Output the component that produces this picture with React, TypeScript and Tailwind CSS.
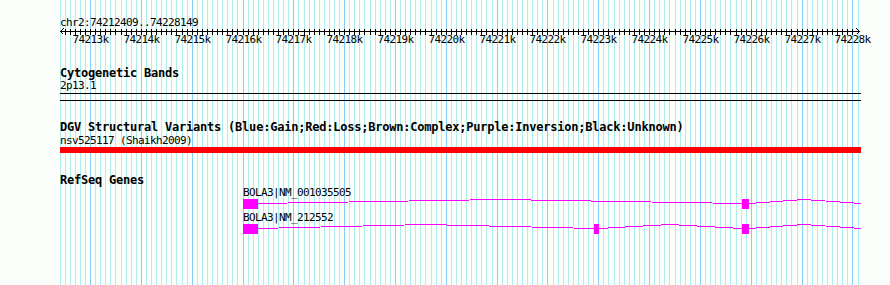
const START = 74212409;
const END = 74228149;
const LEFT = 60;
const WIDTH = 800;

const toX = (bp: number) =>
  Math.round(LEFT + ((bp - START) * WIDTH) / (END - START));

// grid lines every 100bp, darker every 1kb
const grid: { x: number; major: boolean }[] = [];
for (let bp = 74212400; bp <= 74228100; bp += 100) {
  grid.push({ x: toX(bp), major: bp % 1000 === 0 });
}

const ticks: number[] = [];
for (let bp = 74212500; bp <= 74228000; bp += 100) ticks.push(toX(bp) - LEFT);

const labels: { x: number; text: string }[] = [];
for (let k = 74213; k <= 74228; k++) {
  labels.push({ x: toX(k * 1000) - LEFT, text: `${k}k` });
}

type Gene = {
  name: string;
  exons: [number, number][];
  introns: [number, number, number][];
};

// coordinates relative to the left edge of the track (x=60)
const genes: Gene[] = [
  {
    name: "BOLA3|NM_001035505",
    exons: [
      [183, 198],
      [682, 689],
    ],
    introns: [
      [198, 440, 682],
      [689, 744, 801],
    ],
  },
  {
    name: "BOLA3|NM_212552",
    exons: [
      [183, 198],
      [534, 539],
      [682, 689],
    ],
    introns: [
      [198, 366, 534],
      [539, 610, 682],
      [689, 744, 801],
    ],
  },
];

function Ruler() {
  return (
    <svg
      width={801}
      height={18}
      className="overflow-visible"
      shapeRendering="crispEdges"
    >
      <line x1={0} y1={3.5} x2={800} y2={3.5} stroke="#000" />
      <polyline
        points="3.5,0.5 0.5,3.5 3.5,6.5"
        fill="none"
        stroke="#000"
      />
      <polyline
        points="796.5,0.5 799.5,3.5 796.5,6.5"
        fill="none"
        stroke="#000"
      />
      {ticks.map((x) => (
        <line key={x} x1={x + 0.5} y1={1} x2={x + 0.5} y2={7} stroke="#000" />
      ))}
      {labels.map((l) => (
        <text
          key={l.text}
          x={l.x + 0.5}
          y={15}
          textAnchor="middle"
          fontSize={11}
          fontFamily="DejaVu Sans Mono, monospace"
          letterSpacing={-0.62}
          fill="#000"
        >
          {l.text}
        </text>
      ))}
    </svg>
  );
}

function GeneRow({ gene, first }: { gene: Gene; first: boolean }) {
  return (
    <div className={first ? "mt-[1px]" : "mt-[3px]"}>
      <div className="ml-[183px] h-[11px] whitespace-nowrap text-[11px] leading-[11px] tracking-[-0.62px]">
        {gene.name}
      </div>
      <svg
        width={801}
        height={10}
        className="mt-[1px] block"
        shapeRendering="crispEdges"
      >
        {gene.introns.map(([a, m, b]) => (
          <polyline
            key={a}
            points={`${a},4.5 ${m},0.5 ${b},4.5`}
            fill="none"
            stroke="#ff00ff"
          />
        ))}
        {gene.exons.map(([a, b]) => (
          <rect key={a} x={a} y={0} width={b - a} height={10} fill="#ff00ff" />
        ))}
      </svg>
    </div>
  );
}

export default function App() {
  const title =
    "h-[11px] whitespace-nowrap text-[12px] font-bold leading-[11px] tracking-[-0.22px]";
  const small =
    "h-[11px] whitespace-nowrap text-[11px] leading-[11px] tracking-[-0.62px]";

  return (
    <div className="relative h-[285px] w-[890px] overflow-hidden bg-[#fbfefb] font-['DejaVu_Sans_Mono',monospace] text-black">
      {/* background grid */}
      <svg
        className="absolute inset-0"
        width={890}
        height={285}
        shapeRendering="crispEdges"
      >
        {grid.map((g) => (
          <line
            key={g.x}
            x1={g.x + 0.5}
            y1={0}
            x2={g.x + 0.5}
            y2={285}
            stroke={g.major ? "#87cefa" : "#afeeee"}
          />
        ))}
      </svg>

      <div className="relative flex flex-col pl-[60px]">
        <div className={`mt-[17px] ${small}`}>chr2:74212409..74228149</div>
        <Ruler />

        {/* Cytogenetic Bands */}
        <div className={`mt-[22px] ${title}`}>Cytogenetic Bands</div>
        <div className={`mt-[1px] ${small}`}>2p13.1</div>
        <div className="mt-[2px] h-[8px] w-[801px] border-y border-black" />

        {/* DGV */}
        <div className={`mt-[21px] ${title}`}>
          DGV Structural Variants
          (Blue:Gain;Red:Loss;Brown:Complex;Purple:Inversion;Black:Unknown)
        </div>
        <div className={`mt-[2px] ${small}`}>nsv525117 (Shaikh2009)</div>
        <div className="mt-[1px] h-[6px] w-[801px] bg-[#ff0000]" />

        {/* RefSeq */}
        <div className={`mt-[22px] ${title}`}>RefSeq Genes</div>
        {genes.map((g, i) => (
          <GeneRow key={g.name} gene={g} first={i === 0} />
        ))}
      </div>
    </div>
  );
}
